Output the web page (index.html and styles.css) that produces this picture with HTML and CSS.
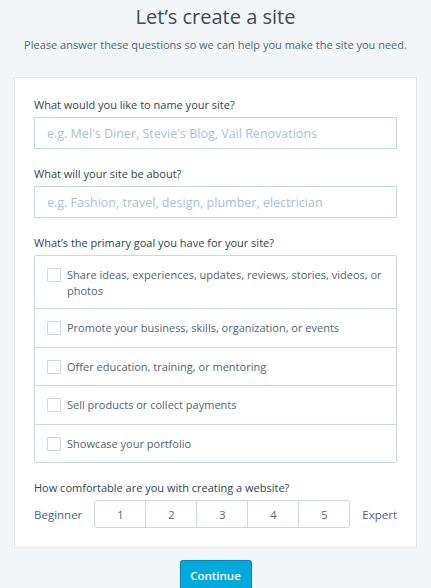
FILE: index.html
```html
<!DOCTYPE html>
<html>
<head>
<meta charset="utf-8">
<link rel="stylesheet" href="styles.css">
</head>
<body>
<div class="page">
  <h1 class="title">Let’s create a site</h1>
  <p class="subtitle">Please answer these questions so we can help you make the site you need.</p>
  <div class="card">
    <div class="field">
      <label class="label">What would you like to name your site?</label>
      <input class="input" type="text" placeholder="e.g. Mel's Diner, Stevie's Blog, Vail Renovations">
    </div>
    <div class="field">
      <label class="label">What will your site be about?</label>
      <input class="input" type="text" placeholder="e.g. Fashion, travel, design, plumber, electrician">
    </div>
    <div class="field">
      <label class="label">What’s the primary goal you have for your site?</label>
      <div class="options">
        <label class="option"><span class="box"></span><span class="opt-text">Share ideas, experiences, updates, reviews, stories, videos, or photos</span></label>
        <label class="option"><span class="box"></span><span class="opt-text">Promote your business, skills, organization, or events</span></label>
        <label class="option"><span class="box"></span><span class="opt-text">Offer education, training, or mentoring</span></label>
        <label class="option"><span class="box"></span><span class="opt-text">Sell products or collect payments</span></label>
        <label class="option"><span class="box"></span><span class="opt-text">Showcase your portfolio</span></label>
      </div>
    </div>
    <div class="field last">
      <label class="label">How comfortable are you with creating a website?</label>
      <div class="scale-row">
        <span class="scale-end">Beginner</span>
        <div class="scale">
          <span class="cell">1</span><span class="cell">2</span><span class="cell">3</span><span class="cell">4</span><span class="cell">5</span>
        </div>
        <span class="scale-end">Expert</span>
      </div>
    </div>
  </div>
  <div class="actions"><button class="btn">Continue</button></div>
</div>
</body>
</html>
```
FILE: styles.css
```css
html, body { margin: 0; padding: 0; }
body {
  background: #f3f6f8;
  font-family: "Open Sans", "Noto Sans", sans-serif;
  color: #2e4453;
  overflow: hidden;
}
.page { padding: 0 14px; width: 403px; }
.title {
  margin: 0;
  padding-top: 4px;
  text-align: center;
  font-weight: 400;
  font-size: 20px;
  line-height: 26px;
  color: #3d4a55;
}
.subtitle {
  margin: 7px 0 0;
  text-align: center;
  font-size: 11px;
  line-height: 16px;
  color: #4f6478;
}
.card {
  margin-top: 24px;
  background: #fff;
  border: 1px solid #e2e8ed;
  padding: 19px 19px 19px 19px;
}
.field { margin-bottom: 17px; }
.field.last { margin-bottom: 0; }
.label {
  display: block;
  font-size: 11px;
  line-height: 16px;
  color: #2e4453;
  margin-bottom: 4px;
}
.input {
  display: block;
  box-sizing: border-box;
  width: 100%;
  height: 32px;
  border: 1px solid #c8d7e1;
  padding: 0 12px;
  font-family: inherit;
  font-size: 12.5px;
  color: #2e4453;
  outline: none;
}
.input::placeholder { color: #a8bfd0; }
.options {
  border: 1px solid #c8d7e1;
  border-radius: 2px;
}
.option {
  display: flex;
  align-items: flex-start;
  padding: 11px 8px 10.5px 12px;
  border-top: 1px solid #c8d7e1;
  font-size: 11px;
  line-height: 16px;
  color: #4f6478;
}
.option:first-child { border-top: none; padding-top: 11px; padding-bottom: 9px; }
.box {
  flex: none;
  width: 12px;
  height: 12px;
  border: 1px solid #c8d7e1;
  border-radius: 1px;
  margin: 1px 6px 0 0;
  background: #fff;
}
.scale-row {
  display: flex;
  align-items: center;
}
.scale-end {
  font-size: 11.5px;
  color: #4f6478;
}
.scale {
  flex: 1;
  display: flex;
  margin: 0 12px;
  border: 1px solid #c8d7e1;
  border-radius: 3px;
  height: 26px;
}
.cell {
  flex: 1;
  display: flex;
  align-items: center;
  justify-content: center;
  font-size: 11px;
  color: #4f6478;
  border-left: 1px solid #c8d7e1;
}
.cell:first-child { border-left: none; }
.actions { display: flex; justify-content: center; margin-top: 12px; }
.btn {
  background: #00aadc;
  border: 1px solid #0087be;
  border-bottom-width: 2px;
  border-radius: 3px;
  color: #fff;
  font-family: inherit;
  font-size: 11.5px;
  font-weight: 600;
  width: 72px;
  height: 32px;
  padding: 0;
}
```
